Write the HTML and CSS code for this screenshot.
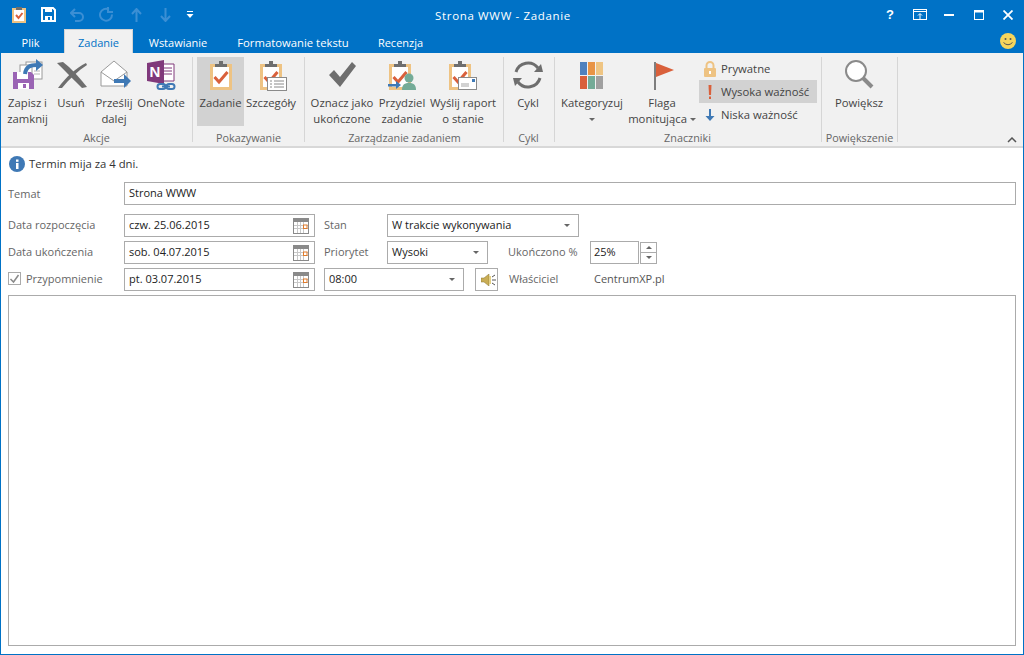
FILE: index.html
```html
<!DOCTYPE html>
<html lang="pl">
<head>
<meta charset="utf-8">
<title>Strona WWW - Zadanie</title>
<link rel="stylesheet" href="styles.css">
</head>
<body>
<svg class="defs" width="0" height="0" aria-hidden="true">
  <symbol id="clip" viewBox="0 0 32 32">
    <rect x="6.500" y="6.500" width="19" height="23" fill="#fff" stroke="#eec383" stroke-width="3"/>
    <path d="M10 8V5h4V2h4v3h4v3z" fill="#6e6e6e"/>
    <path d="M9.500 18l4.500 5 8.500-10" fill="none" stroke="#d9603b" stroke-width="3"/>
  </symbol>
  <symbol id="cal" viewBox="0 0 16 16">
    <rect x=".5" y=".5" width="15" height="15" fill="#fff" stroke="#8a8a8a"/>
    <rect x="1" y="1" width="14" height="3" fill="#8a8a8a"/>
    <path d="M4.500 4v11M7.500 4v11M10.500 4v11M1 7.500h14M1 10.500h14" stroke="#c8c8c8"/>
    <rect x="10.500" y="7" width="3.500" height="3.500" fill="#fff" stroke="#e07b2b"/>
  </symbol>
</svg>
<div class="window">
  <header class="titlebar">
    <div class="qat">
      <svg class="q q-task" width="14" height="16" viewBox="0 0 14 16"><rect x="1" y="2" width="12" height="13" fill="#fff" stroke="#eec383" stroke-width="2"/><rect x="4" y="0" width="6" height="3" fill="#6e6e6e"/><path d="M4 8l2.500 3 4-5" fill="none" stroke="#d9603b" stroke-width="2"/></svg>
      <svg class="q q-save" width="15" height="15" viewBox="0 0 15 15"><path d="M1 1h11l2 2v11H1z" fill="none" stroke="#fff" stroke-width="2"/><rect x="4" y="1" width="7" height="4" fill="#fff"/><rect x="4" y="9" width="7" height="5" fill="#fff"/><rect x="7" y="10" width="2" height="3" fill="#0072c6"/></svg>
      <svg class="q q-undo" width="15" height="14" viewBox="0 0 15 14"><path d="M1 5h8a4 4 0 0 1 0 8H5M5 1L1 5l4 4" fill="none" stroke="#3b8fd4" stroke-width="2"/></svg>
      <svg class="q q-redo" width="15" height="15" viewBox="0 0 15 15"><path d="M10 2.500a6 6 0 1 0 3 5M9 0v5h5" fill="none" stroke="#3b8fd4" stroke-width="2"/></svg>
      <svg class="q q-up" width="11" height="14" viewBox="0 0 11 14"><path d="M5.500 14V2M1 6l4.500-5L10 6" fill="none" stroke="#3b8fd4" stroke-width="2"/></svg>
      <svg class="q q-down" width="11" height="14" viewBox="0 0 11 14"><path d="M5.500 0v12M1 8l4.500 5L10 8" fill="none" stroke="#3b8fd4" stroke-width="2"/></svg>
      <svg class="q q-more" width="8" height="8" viewBox="0 0 8 8"><path d="M1 .5h6" stroke="#fff"/><path d="M.5 3h7L4 7z" fill="#fff"/></svg>
    </div>
    <div class="title">Strona WWW - Zadanie</div>
    <div class="controls">
      <span class="help">?</span>
      <svg class="c c-disp" width="14" height="11" viewBox="0 0 14 11"><rect x=".5" y=".5" width="13" height="10" fill="none" stroke="#fff"/><path d="M1 2.500h12" stroke="#fff"/><path d="M7 10V5M5 6.500L7 4.500l2 2" fill="none" stroke="#fff"/></svg>
      <svg class="c c-min" width="10" height="2" viewBox="0 0 10 2"><rect width="10" height="2" fill="#fff"/></svg>
      <svg class="c c-max" width="10" height="10" viewBox="0 0 10 10"><rect x=".5" y=".5" width="9" height="9" fill="none" stroke="#fff"/><rect width="10" height="2.500" fill="#fff"/></svg>
      <svg class="c c-close" width="10" height="10" viewBox="0 0 10 10"><path d="M.5.500l9 9M9.500.500l-9 9" stroke="#fff" stroke-width="1.800"/></svg>
    </div>
  </header>

  <nav class="tabs">
    <span class="tab tab-plik">Plik</span>
    <span class="tab tab-active">Zadanie</span>
    <span class="tab tab-w">Wstawianie</span>
    <span class="tab tab-f">Formatowanie tekstu</span>
    <span class="tab tab-r">Recenzja</span>
    <svg class="smiley" width="16" height="16" viewBox="0 0 16 16"><circle cx="8" cy="8" r="8" fill="#f6d55c"/><circle cx="5.500" cy="6" r="1" fill="#555"/><circle cx="10.500" cy="6" r="1" fill="#555"/><path d="M3.500 9.500q4.500 4.500 9 0" fill="none" stroke="#555"/></svg>
  </nav>

  <section class="ribbon">
    <div class="group g1">
      <div class="group-body">
        <div class="rb w45">
          <svg class="ri" viewBox="0 0 32 32"><rect x="14" y="3" width="16" height="17" fill="#fff" stroke="#9a9a9a"/><path d="M22 12h6M22 15h6" stroke="#b5b5b5"/><rect x="8" y="6" width="12" height="10" fill="#fff" stroke="#9a9a9a"/><path d="M1 13h18l3 3v14H1z" fill="#9a64b4"/><rect x="5" y="13" width="11" height="7" fill="#fff"/><rect x="6" y="24" width="11" height="6" fill="#fff"/><rect x="11" y="25" width="3" height="4" fill="#9a64b4"/><path d="M13 15C14 7 19 6 25 6" fill="none" stroke="#3f79b5" stroke-width="4"/><path d="M24 0l7 6-7 6z" fill="#3f79b5"/></svg>
          <span>Zapisz i<br>zamknij</span>
        </div>
        <div class="rb w42">
          <svg class="ri" viewBox="0 0 32 32"><path d="M1 4l6-1C15 9 23 18 31 28l-5 1C18 21 10 13 1 4z" fill="#6e6e6e"/><path d="M31 6l-1-2C20 9 10 18 2 29l4 0C13 20 22 12 31 6z" fill="#6e6e6e"/></svg>
          <span>Usuń</span>
        </div>
        <div class="rb w44">
          <svg class="ri" viewBox="0 0 32 32"><path d="M2 13L15 2l13 11v14H2z" fill="#fff" stroke="#9a9a9a"/><path d="M2 13l13 9 13-9" fill="none" stroke="#9a9a9a"/><rect x="15" y="20" width="11" height="4" fill="#3f79b5"/><path d="M25 15l7 7-7 7z" fill="#3f79b5"/></svg>
          <span>Prześlij<br>dalej</span>
        </div>
        <div class="rb w50">
          <svg class="ri" viewBox="0 0 32 32"><path d="M14 5h14v17H14z" fill="#fff" stroke="#80397b"/><path d="M18 9h8M18 12h8M18 15h8" stroke="#80397b"/><path d="M1 4l17-3v24L1 22z" fill="#80397b"/><text x="3.500" y="18" class="on">N</text><path d="M14 25h3a2.500 2.500 0 0 1 0 5h-3a2.500 2.500 0 0 1 0-5M23 25h3a2.500 2.500 0 0 1 0 5h-3a2.500 2.500 0 0 1 0-5M16 27.500h8" fill="none" stroke="#3f79b5" stroke-width="2"/></svg>
          <span>OneNote</span>
        </div>
      </div>
      <div class="group-label">Akcje</div>
    </div>

    <div class="group g2">
      <div class="group-body">
        <div class="rb w47 on-state">
          <svg class="ri"><use href="#clip"/></svg>
          <span>Zadanie</span>
        </div>
        <div class="rb w54">
          <svg class="ri ri-shift" viewBox="0 0 32 32"><use href="#clip" width="32" height="32" x="-3" y="0"/><rect x="9.500" y="18.500" width="19" height="13" fill="#fff" stroke="#8a8a8a"/><path d="M12 22h2M16 22h10M12 25h2M16 25h10M12 28h2M16 28h10" stroke="#8a8a8a"/></svg>
          <span>Szczegóły</span>
        </div>
      </div>
      <div class="group-label">Pokazywanie</div>
    </div>

    <div class="group g3">
      <div class="group-body">
        <div class="rb w64">
          <svg class="ri" viewBox="0 0 32 32"><path d="M3 16l5-5 6 7L26 3l4 4-16 21z" fill="#6e6e6e"/></svg>
          <span>Oznacz jako<br>ukończone</span>
        </div>
        <div class="rb w56">
          <svg class="ri" viewBox="0 0 32 32"><use href="#clip" width="32" height="32" x="-2" y="0"/><circle cx="23" cy="19" r="4.500" fill="#74ab97"/><path d="M16 31c0-6 3-7 7-7s7 1 7 7z" fill="#74ab97"/><rect x="2" y="25" width="9" height="2.500" fill="#3f79b5"/><path d="M10 22l5 4-5 4z" fill="#3f79b5"/></svg>
          <span>Przydziel<br>zadanie</span>
        </div>
        <div class="rb w66">
          <svg class="ri" viewBox="0 0 32 32"><use href="#clip" width="32" height="32" x="-3" y="0"/><rect x="11.500" y="18.500" width="18" height="12" fill="#fff" stroke="#8a8a8a"/><rect x="25" y="20" width="3" height="3" fill="#3f79b5"/><path d="M14 25h8M14 27h8" stroke="#a5a5a5"/></svg>
          <span>Wyślij raport<br>o stanie</span>
        </div>
      </div>
      <div class="group-label">Zarządzanie zadaniem</div>
    </div>

    <div class="group g4">
      <div class="group-body">
        <div class="rb w36">
          <svg class="ri" viewBox="0 0 32 32"><path d="M4 13A12.500 12.500 0 0 1 26 9M28 19A12.500 12.500 0 0 1 6 23" fill="none" stroke="#6e6e6e" stroke-width="3"/><path d="M31 13l-9 0 7-8zM1 19l9 0-7 8z" fill="#6e6e6e"/></svg>
          <span>Cykl</span>
        </div>
      </div>
      <div class="group-label">Cykl</div>
    </div>

    <div class="group g5">
      <div class="group-body">
        <div class="rb w68">
          <svg class="ri" viewBox="0 0 32 32"><rect x="4" y="3" width="7" height="13" fill="#4f81bd"/><rect x="12" y="3" width="7" height="13" fill="#e89445"/><rect x="20" y="3" width="7" height="13" fill="#efc583"/><rect x="4" y="17" width="7" height="13" fill="#d9603b"/><rect x="12" y="17" width="7" height="13" fill="#74ab97"/><rect x="20" y="17" width="7" height="13" fill="#a0a0a0"/></svg>
          <span>Kategoryzuj<br><i class="arrow"></i></span>
        </div>
        <div class="rb w68 rb-flag">
          <svg class="ri" viewBox="0 0 32 32"><rect x="8" y="3" width="2" height="28" fill="#7e7e7e"/><path d="M10 4l18 7-18 7z" fill="#d9603b"/></svg>
          <span>Flaga<br>monitująca <i class="arrow"></i></span>
        </div>
        <div class="small-col">
          <div class="sb"><svg width="16" height="16" viewBox="0 0 16 16"><path d="M4.500 7V4.500a3.500 3.500 0 0 1 7 0V7" fill="none" stroke="#eec383" stroke-width="2"/><rect x="2" y="7" width="12" height="9" rx="1" fill="#eec383"/><rect x="7" y="10" width="2" height="3" fill="#fff"/></svg>Prywatne</div>
          <div class="sb sb-on"><svg width="16" height="16" viewBox="0 0 16 16"><path d="M6.500 1h3L9 11H7z" fill="#d9603b"/><rect x="7" y="12.500" width="2" height="2.500" fill="#d9603b"/></svg>Wysoka ważność</div>
          <div class="sb"><svg width="16" height="16" viewBox="0 0 16 16"><path d="M7 2h2v7h3.500L8 14 3.500 9H7z" fill="#3f79b5"/></svg>Niska ważność</div>
        </div>
      </div>
      <div class="group-label">Znaczniki</div>
    </div>

    <div class="group g6">
      <div class="group-body">
        <div class="rb w66">
          <svg class="ri" viewBox="0 0 32 32"><circle cx="13" cy="12" r="10" fill="#fff" stroke="#8a8a8a" stroke-width="2"/><path d="M20 19l9 9" stroke="#8a8a8a" stroke-width="4"/></svg>
          <span>Powiększ</span>
        </div>
      </div>
      <div class="group-label">Powiększenie</div>
    </div>

    <div class="collapse"><svg width="10" height="6" viewBox="0 0 10 6"><path d="M1 5l4-4 4 4" fill="none" stroke="#555" stroke-width="1.500"/></svg></div>
  </section>

  <main class="form">
    <div class="info"><svg width="16" height="16" viewBox="0 0 16 16"><circle cx="8" cy="8" r="8" fill="#3f79b5"/><rect x="7" y="7" width="2.500" height="6" fill="#fff"/><rect x="7" y="3.500" width="2.500" height="2.300" fill="#fff"/></svg><span class="info-text">Termin mija za 4 dni.</span></div>

    <div class="row row-subject">
      <label class="lab lab-main">Temat</label>
      <div class="field grow">Strona WWW</div>
    </div>

    <div class="row">
      <label class="lab lab-main">Data rozpoczęcia</label>
      <div class="field date">czw. 25.06.2015<svg class="calico"><use href="#cal"/></svg></div>
      <label class="lab lab-second">Stan</label>
      <div class="field sel sel-state">W trakcie wykonywania<i class="arrow"></i></div>
    </div>

    <div class="row">
      <label class="lab lab-main">Data ukończenia</label>
      <div class="field date">sob. 04.07.2015<svg class="calico"><use href="#cal"/></svg></div>
      <label class="lab lab-second">Priorytet</label>
      <div class="field sel sel-prio">Wysoki<i class="arrow"></i></div>
      <label class="lab lab-pct">Ukończono %</label>
      <div class="field pct">25%</div>
      <div class="spin"><span class="spin-b"><i class="arrow up"></i></span><span class="spin-b"><i class="arrow"></i></span></div>
    </div>

    <div class="row">
      <label class="lab lab-main lab-check"><span class="check"><svg width="13" height="13" viewBox="0 0 13 13"><path d="M2.500 7l3 3 5-7" fill="none" stroke="#8a8a8a" stroke-width="1.500"/></svg></span>Przypomnienie</label>
      <div class="field date">pt. 03.07.2015<svg class="calico"><use href="#cal"/></svg></div>
      <div class="field sel sel-time">08:00<i class="arrow"></i></div>
      <div class="sound"><svg width="15" height="12" viewBox="0 0 15 12"><path d="M0 4h3l5-4v12L3 8H0z" fill="#c9ad55" stroke="#8a7630" stroke-width=".5"/><rect x="8" y="2" width="2" height="8" fill="#e3cf85"/><path d="M11 3l3-2M11 6h4M11 9l3 2" stroke="#555"/></svg></div>
      <label class="lab lab-owner">Właściciel</label>
      <span class="owner">CentrumXP.pl</span>
    </div>

    <div class="notes"></div>
  </main>
</div>
</body>
</html>
```

FILE: styles.css
```css
* { box-sizing: border-box; }
html, body { margin: 0; padding: 0; }
body {
  width: 1024px;
  height: 655px;
  overflow: hidden;
  font-family: "Open Sans", "Liberation Sans", sans-serif;
  font-size: 11px;
  color: #444;
}
.defs { display: block; height: 0; }
.window {
  width: 1024px;
  height: 655px;
  display: flex;
  flex-direction: column;
  background: #0072c6;
  padding: 0 1px 1px;
}

/* Title bar */
.titlebar {
  height: 29px;
  flex: none;
  display: grid;
  grid-template-columns: 1fr 220px 1fr;
  align-items: center;
  color: #fff;
}
.qat { display: flex; align-items: center; padding-left: 11px; }
.q-save { margin-left: 15px; }
.q-undo { margin-left: 14px; }
.q-redo { margin-left: 14px; }
.q-up { margin-left: 17px; }
.q-down { margin-left: 18px; }
.q-more { margin-left: 15px; }
.title { text-align: center; font-size: 11.500px; letter-spacing: .65px; white-space: nowrap; margin-top: 2px; transform: translateX(-9px); }
.controls { display: flex; align-items: center; justify-content: flex-end; padding-right: 10px; }
.help { font-weight: 700; font-size: 13px; margin-right: 19px; font-family: "Liberation Sans", sans-serif; }
.c-min { margin-left: 17px; margin-top: 1px; }
.c-max { margin-left: 20px; }
.c-close { margin-left: 19px; }

/* Tabs */
.tabs { height: 24px; flex: none; display: flex; align-items: stretch; color: #fff; position: relative; }
.tab { display: flex; align-items: center; justify-content: center; font-size: 11px; padding-top: 2px; }
.tab-plik { width: 63px; padding-right: 4px; }
.tab-active { width: 69px; background: #f1f1f1; color: #0072c6; border: 1px solid #d4d4d4; border-bottom: 0; }
.tab-w { width: 90px; }
.tab-f { width: 140px; font-size: 11.300px; }
.tab-r { width: 75px; }
.smiley { position: absolute; right: 7px; top: 4px; }

/* Ribbon */
.ribbon {
  height: 95px;
  flex: none;
  display: flex;
  background: #f1f1f1;
  border-bottom: 2px solid #d8d8d8;
  position: relative;
  padding-top: 4px;
}
.group { display: block; position: relative; height: 85px; border-right: 1px solid #d6d6d6; flex: none; }
.group-body { display: flex; height: 73px; }
.group-label { text-align: center; color: #666; font-size: 10.800px; line-height: 16px; height: 16px; margin-left: -4px; white-space: nowrap; }
.g1 { width: 192px; padding-left: 4px; }
.g2 { width: 112px; padding-left: 4px; }
.g3 { width: 199px; padding-left: 5px; }
.g4 { width: 51px; padding-left: 6px; }
.g4 .group-label { margin-left: -7px; }
.g5 { width: 267px; padding-left: 3px; }
.g6 { width: 76px; padding-left: 4px; }
.rb {
  display: flex;
  flex-direction: column;
  align-items: center;
  text-align: center;
  line-height: 16px;
  font-size: 11.300px;
  flex: none;
  color: #444;
  white-space: nowrap;
  height: 69px;
}
.ri { width: 32px; height: 32px; margin: 2px 0 4px; flex: none; display: block; }
.g1 .ri { margin-left: 1px; }
.ri-shift { margin-left: 5px; }
.rb-flag { margin-left: 2px; }
.on { font: 700 15px "Liberation Sans", sans-serif; fill: #fff; }
.w36 { width: 36px; } .w42 { width: 42px; } .w44 { width: 44px; } .w45 { width: 45px; }
.w47 { width: 47px; } .w50 { width: 50px; } .w54 { width: 54px; } .w56 { width: 56px; }
.w64 { width: 64px; } .w66 { width: 66px; } .w68 { width: 68px; }
.on-state { background: #d2d2d2; }
.arrow {
  display: inline-block;
  width: 0; height: 0;
  border-left: 3px solid transparent;
  border-right: 3px solid transparent;
  border-top: 3px solid #666;
  vertical-align: middle;
}
.arrow.up { border-top: 0; border-bottom: 3px solid #666; }
.small-col { width: 118px; margin-left: 3px; padding-top: 0; display: flex; flex-direction: column; }
.sb { display: flex; align-items: center; height: 23px; gap: 3px; padding-left: 3px; color: #444; font-size: 11.300px; white-space: nowrap; }
.sb-on { background: #d2d2d2; }
.collapse { position: absolute; right: 6px; bottom: 3px; line-height: 0; }

/* Form */
.form {
  flex: 1;
  background: #fff;
  padding: 6px 7px 8px;
  display: flex;
  flex-direction: column;
  color: #222;
}
.info { display: flex; align-items: center; gap: 4px; height: 20px; color: #333; margin-left: 1px; margin-bottom: 8px; }
.info-text { font-size: 11.300px; padding-bottom: 2px; }
.row { display: flex; align-items: center; height: 23px; margin-bottom: 4px; }
.row-subject { margin-bottom: 9px; }
.lab { color: #666; white-space: nowrap; flex: none; padding-bottom: 2px; }
.row-subject .lab { padding-bottom: 0; }
.lab-main { width: 116px; }
.lab-second { width: 63px; margin-left: 9px; }
.lab-pct { width: 82px; margin-left: 20px; }
.lab-owner { width: 85px; margin-left: 11px; }
.lab-check { display: flex; align-items: center; gap: 5px; }
.check { width: 13px; height: 13px; border: 1px solid #aaa; display: block; line-height: 0; }
.check svg { display: block; margin: -1px; }
.field {
  height: 23px;
  border: 1px solid #ababab;
  padding: 0 4px 2px;
  display: flex;
  align-items: center;
  color: #222;
  position: relative;
  white-space: nowrap;
  background: #fff;
}
.grow { flex: 1; margin-right: 0; }
.date { width: 191px; flex: none; justify-content: space-between; padding-right: 5px; }
.calico { width: 16px; height: 16px; flex: none; margin-top: 2px; }
.sel { justify-content: space-between; padding-right: 8px; flex: none; }
.sel .arrow { margin-top: 2px; }
.sel-state { width: 192px; }
.sel-prio { width: 101px; }
.sel-time { width: 140px; margin-left: 9px; }
.pct { width: 49px; flex: none; padding-left: 3px; }
.spin { display: flex; flex-direction: column; width: 17px; height: 22px; flex: none; margin-left: 1px; }
.spin-b { flex: 1; border: 1px solid #ababab; display: flex; align-items: center; justify-content: center; }
.spin-b + .spin-b { border-top: 0; }
.sound { width: 23px; height: 23px; border: 1px solid #ababab; flex: none; margin-left: 11px; display: flex; align-items: center; justify-content: center; padding-left: 3px; }
.owner { color: #555; padding-bottom: 2px; }
.notes { flex: 1; border: 1px solid #ababab; margin-top: 0; }
```
